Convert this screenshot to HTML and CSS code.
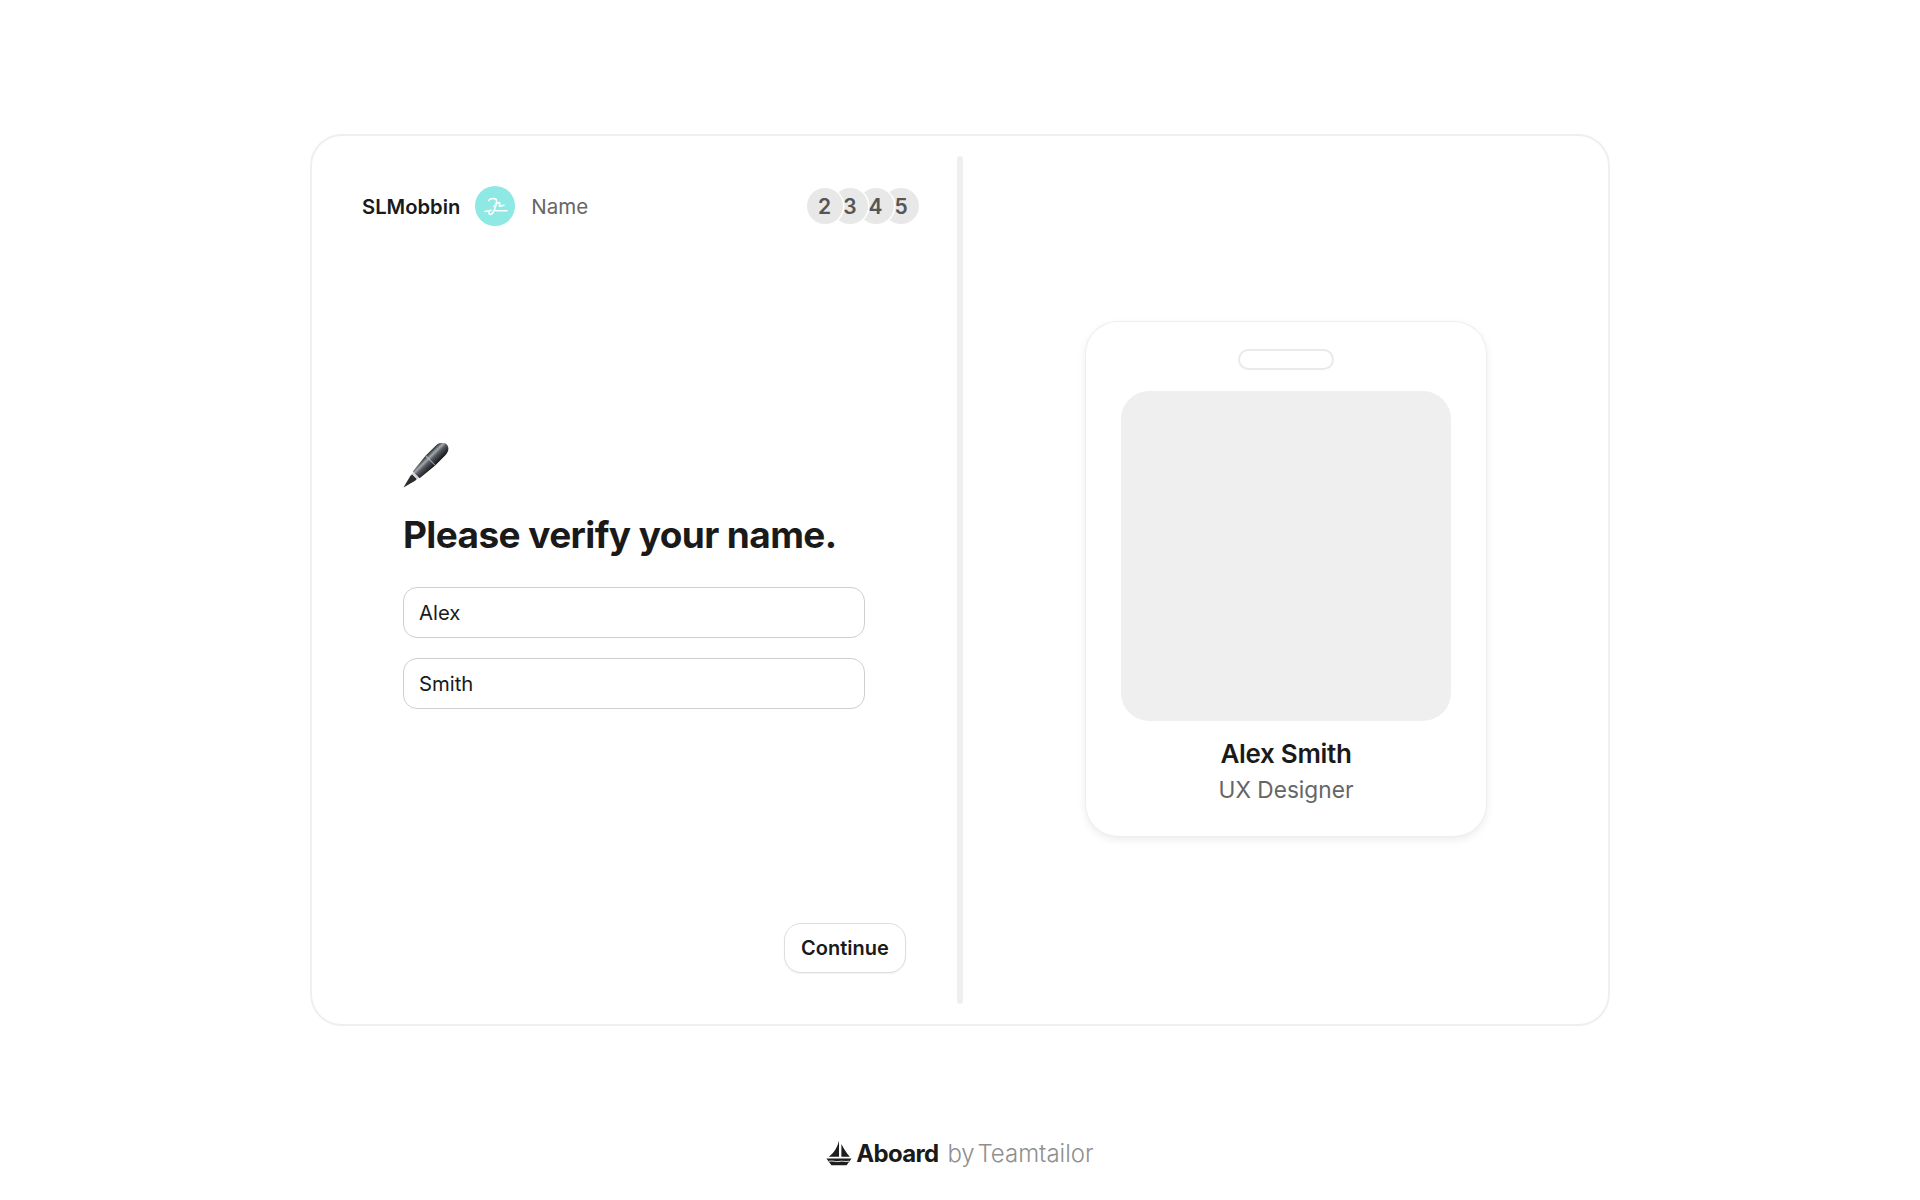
FILE: index.html
```html
<!DOCTYPE html>
<html lang="en">
<head>
<meta charset="utf-8">
<title>Aboard – Verify your name</title>
<link rel="stylesheet" href="styles.css">
</head>
<body>
<div class="page">
  <section class="card">
    <div class="panel">
      <header class="topbar">
        <span class="company">SLMobbin</span>
        <span class="step-icon">
          <svg width="40" height="40" viewBox="0 0 40 40" fill="none" stroke="#fff" stroke-width="1.5" stroke-linecap="round" stroke-linejoin="round">
            <path d="M13.5 14.6C15.5 11.8 21.6 11.6 21.6 15C21.6 19.4 18.2 28.4 15.4 28.4C13.2 28.4 13.6 24.6 16.2 24.2L10 25.4"/>
            <path d="M19 20.4C21 18.4 23 16 24.6 16.6C26.2 17.2 23 20.2 25 20.2L29 19.2"/>
            <path d="M20.6 24.8H32"/>
          </svg>
        </span>
        <span class="step-label">Name</span>
        <ol class="steps">
          <li class="step step-a">2</li>
          <li class="step step-b">3</li>
          <li class="step step-c">4</li>
          <li class="step step-d">5</li>
        </ol>
      </header>
      <main class="main">
        <svg class="pen" width="46" height="46" viewBox="0 0 46 46">
          <defs>
            <linearGradient id="barrel" x1="0" y1="0" x2="0" y2="1">
              <stop offset="0" stop-color="#23262a"/>
              <stop offset=".28" stop-color="#a3a8ae"/>
              <stop offset=".5" stop-color="#565a60"/>
              <stop offset="1" stop-color="#111316"/>
            </linearGradient>
          </defs>
          <g transform="translate(0.5 44.5) rotate(-45)">
            <path d="M0 0L13 -3.4H15.5V3.4H13Z" fill="#2a2c30"/>
            <rect x="15.5" y="-4" width="2.4" height="8" fill="#d2d4d8"/>
            <path d="M18 -4.8L38 -6.8H52C58 -6.8 61 -3.4 61 0C61 3.4 58 6.8 52 6.8H38L18 4.8Z" fill="url(#barrel)"/>
            <rect x="37.5" y="-6.8" width="1.2" height="13.6" fill="#d4d6d9" opacity=".55"/>
          </g>
        </svg>
        <h1 class="title">Please verify your name.</h1>
        <form class="fields">
          <input class="field" type="text" value="Alex" aria-label="First name">
          <input class="field" type="text" value="Smith" aria-label="Last name">
        </form>
      </main>
      <div class="actions">
        <button class="continue" type="button">Continue</button>
      </div>
    </div>
    <div class="divider"></div>
    <aside class="preview">
      <div class="badge">
        <div class="slot"></div>
        <div class="photo"></div>
        <div class="badge-name">Alex Smith</div>
        <div class="badge-role">UX Designer</div>
      </div>
    </aside>
  </section>
  <footer class="footer">
    <svg class="boat" width="26" height="26" viewBox="0 0 24 24" fill="#1d1d1d">
      <path d="M12 .4V15.4H2.6C7 12 10.6 7 12 .4Z"/>
      <path d="M14.2 3.6C16.4 8 19 12 22 15.4H14.2Z"/>
      <path d="M.4 17H23.6L19 23.4H5Z"/>
      <path d="M2.6 19.6C7 18.8 9 20.6 12 19.8C15 19 17 20.4 21.4 19.6" fill="none" stroke="#fff" stroke-width=".8"/>
    </svg>
    <span class="brand">Aboard</span>
    <span class="by">by Teamtailor</span>
  </footer>
</div>
</body>
</html>
```

FILE: styles.css
```css
* { box-sizing: border-box; }
html, body { margin: 0; background: #fff; }
body {
  font-family: Inter, "Liberation Sans", sans-serif;
  color: #1a1a1a;
}
.page {
  height: 1200px;
  padding-top: 134px;
  display: flex;
  flex-direction: column;
  align-items: center;
}
.card {
  width: 1300px;
  height: 892px;
  border: 2px solid #efefef;
  border-radius: 32px;
  display: flex;
  padding: 20px 0;
}
.panel {
  width: 645px;
  display: flex;
  flex-direction: column;
  padding: 30px 0 31px;
}
.topbar {
  height: 40px;
  display: flex;
  align-items: center;
  padding: 0 38px 0 50px;
}
.company { font-size: 20.2px; font-weight: 600; }
.step-icon {
  width: 40px;
  height: 40px;
  margin-left: 15px;
  border-radius: 50%;
  background: #8ee8e4;
  display: flex;
}
.step-label { margin-left: 16px; font-size: 20.5px; color: #666; }
.steps {
  list-style: none;
  margin: 0 0 0 auto;
  padding: 0;
  display: flex;
}
.step {
  width: 36px;
  height: 36px;
  margin-left: -10.5px;
  border-radius: 50%;
  background: #e8e8e8;
  box-shadow: 0 0 0 1.5px #fff;
  color: #555;
  font-size: 21px;
  font-weight: 600;
  display: flex;
  align-items: center;
  justify-content: center;
  position: relative;
}
.step-a { margin-left: 0; z-index: 4; }
.step-b { z-index: 3; }
.step-c { z-index: 2; }
.step-d { z-index: 1; }
.main {
  flex: 1;
  display: flex;
  flex-direction: column;
  justify-content: center;
  padding: 3px 91px 0;
}
.pen { display: block; }
.title {
  margin: 22px 0 0;
  font-size: 37px;
  line-height: 48px;
  font-weight: 700;
  letter-spacing: -.6px;
  white-space: nowrap;
}
.fields {
  margin-top: 28px;
  display: flex;
  flex-direction: column;
  gap: 20px;
}
.field {
  width: 462px;
  height: 51px;
  padding: 0 15px;
  border: 1.5px solid #cfcfcf;
  border-radius: 14px;
  background: #fff;
  color: #1a1a1a;
  font: 400 20.3px Inter, "Liberation Sans", sans-serif;
  outline: none;
}
.actions {
  display: flex;
  justify-content: flex-end;
  padding: 0 51px;
}
.continue {
  width: 122px;
  height: 50px;
  border: 1.5px solid #dedede;
  border-radius: 17px;
  background: #fff;
  box-shadow: 0 1px 2px rgba(0,0,0,.06);
  color: #1a1a1a;
  font: 600 20px Inter, "Liberation Sans", sans-serif;
  padding: 0;
}
.divider {
  width: 6px;
  border-radius: 3px;
  background: #efefef;
}
.preview {
  flex: 1;
  display: flex;
  align-items: center;
  justify-content: center;
  padding: 0 0 3px 1px;
}
.badge {
  width: 400px;
  height: 514px;
  border-radius: 32px;
  background: #fff;
  box-shadow: 0 0 0 1px #eee, 0 3px 10px rgba(0,0,0,.09);
  display: flex;
  flex-direction: column;
  align-items: center;
  padding-top: 27px;
}
.slot {
  width: 96px;
  height: 21px;
  border: 2px solid #eaeaea;
  border-radius: 11px;
}
.photo {
  width: 330px;
  height: 330px;
  margin-top: 21px;
  border-radius: 28px;
  background: #efefef;
}
.badge-name {
  margin-top: 17px;
  font-size: 26px;
  line-height: 32px;
  font-weight: 600;
  letter-spacing: -.3px;
}
.badge-role {
  margin-top: 5px;
  font-size: 22.7px;
  line-height: 30px;
  color: #666;
}
.footer {
  margin-top: 115px;
  display: flex;
  align-items: center;
  height: 24px;
}
.boat { display: block; }
.brand {
  margin-left: 4px;
  font-size: 24px;
  font-weight: 700;
  letter-spacing: -.7px;
}
.by {
  margin-left: 9px;
  font-size: 24px;
  font-weight: 300;
  word-spacing: -4px;
  color: #8f8f8f;
}
```
